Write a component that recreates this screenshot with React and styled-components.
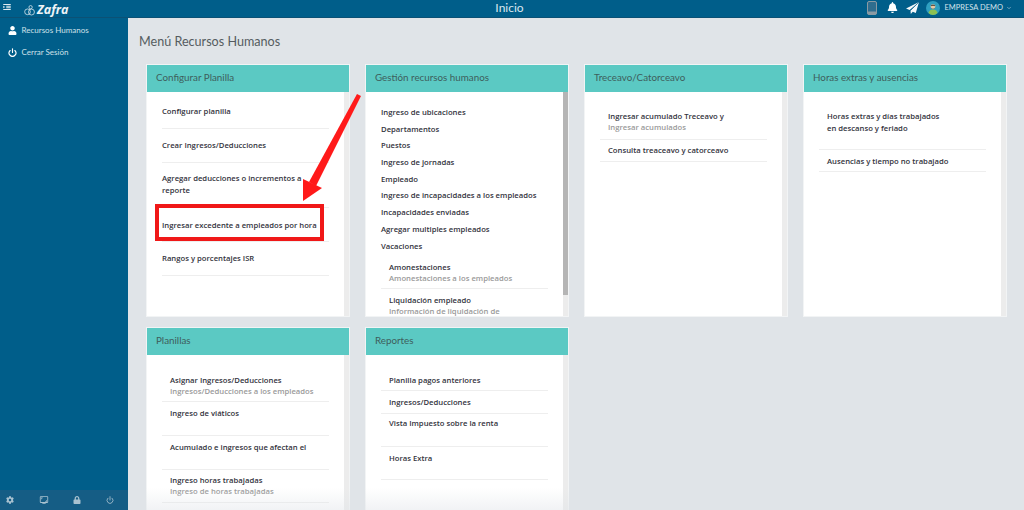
import React from "react";
import styled, { createGlobalStyle } from "styled-components";
import { FaUser, FaBell, FaCog, FaLock } from "react-icons/fa";
import { FiPower, FiChevronDown } from "react-icons/fi";
import { MdOutlineScreenshotMonitor } from "react-icons/md";

const GlobalStyle = createGlobalStyle`
  html, body { margin: 0; padding: 0; height: 100%; overflow: hidden; }
  body { font-family: "Open Sans", "Liberation Sans", sans-serif; background: #e0e4e8; }
  #root { height: 100%; }
`;

const cards = [
  {
    title: "Configurar Planilla",
    top: 5,
    rows: [
      { label: "Configurar planilla", h: 32, pt: 8 },
      { label: "Crear Ingresos/Deducciones", h: 34, pt: 10 },
      { label: "Agregar deducciones o incrementos a reporte", h: 45, pt: 9 },
      { label: "Ingresar excedente a empleados por hora", h: 34, pt: 11 },
      { label: "Rangos y porcentajes ISR", h: 34, pt: 10 },
    ],
  },
  {
    title: "Gestión recursos humanos",
    dark: true,
    top: 12,
    plain: [
      "Ingreso de ubicaciones",
      "Departamentos",
      "Puestos",
      "Ingreso de jornadas",
      "Empleado",
      "Ingreso de incapacidades a los empleados",
      "Incapacidades enviadas",
      "Agregar multiples empleados",
      "Vacaciones",
    ],
    inset: true,
    rows: [
      { label: "Amonestaciones", sub: "Amonestaciones a los empleados", h: 35, pt: 7 },
      { label: "Liquidación empleado", sub: "Información de liquidación de", h: 33, pt: 5 },
    ],
  },
  {
    title: "Treceavo/Catorceavo",
    inset: true,
    top: 10,
    rows: [
      { label: "Ingresar acumulado Treceavo y", sub: "Ingresar acumulados", h: 38, pt: 8 },
      { label: "Consulta treaceavo y catorceavo", h: 22, pt: 3.5 },
    ],
  },
  {
    title: "Horas extras y ausencias",
    inset: true,
    top: 10,
    rows: [
      { label: "Horas extras y días trabajados en descanso y feriado", h: 48, pt: 8, narrow: true },
      { label: "Ausencias y tiempo no trabajado", h: 22, pt: 4.5 },
    ],
  },
  {
    title: "Planillas",
    inset: true,
    top: 10,
    rows: [
      { label: "Asignar Ingresos/Deducciones", sub: "Ingresos/Deducciones a los empleados", h: 37, pt: 8.5 },
      { label: "Ingreso de viáticos", h: 34, pt: 5 },
      { label: "Acumulado e ingresos que afectan el", h: 34, pt: 5 },
      { label: "Ingreso horas trabajadas", sub: "Ingreso de horas trabajadas", h: 33, pt: 3.5 },
    ],
  },
  {
    title: "Reportes",
    inset: true,
    top: 10,
    rows: [
      { label: "Planilla pagos anteriores", h: 26, pt: 8.5 },
      { label: "Ingresos/Deducciones", h: 23, pt: 5 },
      { label: "Vista Impuesto sobre la renta", h: 33, pt: 2.5 },
      { label: "Horas Extra", h: 33, pt: 5 },
    ],
  },
];

function Logo() {
  return (
    <LogoWrap>
      <svg width="11" height="11" viewBox="0 0 10 10" fill="none" stroke="#dfeaf0" strokeWidth="0.7">
        <circle cx="3.2" cy="6.2" r="2.6" />
        <circle cx="6.8" cy="6.4" r="2.7" />
        <circle cx="6" cy="2" r="1.5" />
      </svg>
      <LogoText>Zafra</LogoText>
    </LogoWrap>
  );
}

function Avatar() {
  return (
    <svg width="14" height="14" viewBox="0 0 14 14">
      <circle cx="7" cy="7" r="7" fill="#2f9fc0" />
      <path d="M2.5 12c.5-2.6 2.2-3.6 4.5-3.6s4 1 4.5 3.6A7 7 0 0 1 7 14a7 7 0 0 1-4.5-2z" fill="#8cc152" />
      <circle cx="7" cy="5.6" r="2.4" fill="#e8c9a4" />
      <path d="M4.8 5.2C5 3.3 9 3.3 9.2 5.2 8 4.5 6 4.5 4.8 5.2z" fill="#4a4038" />
      <path d="M5.2 6.8c.8 1.5 2.8 1.5 3.6 0 0 1.7-3.6 1.7-3.6 0z" fill="#4a4038" />
    </svg>
  );
}

function PhoneIcon() {
  return (
    <svg width="10" height="14" viewBox="0 0 10 14">
      <rect x="0.5" y="0.5" width="9" height="13" rx="1.5" fill="#2f6d8e" stroke="#8a9aa3" />
      <rect x="0.5" y="10.5" width="9" height="3" rx="1" fill="#8a9aa3" />
    </svg>
  );
}

function PlaneIcon() {
  return (
    <svg width="13" height="12" viewBox="0 0 13 12">
      <path d="M13 0L0 6.5l3.6 1.4zM13 0L4.5 8.5 4.8 12l2-2.3 3 1.3z" fill="#f4f8fa" />
      <path d="M13 0L4.5 8.5" stroke="#005e8a" strokeWidth="0.6" />
    </svg>
  );
}

function Card({ card }) {
  return (
    <CardBox>
      <CardHead>{card.title}</CardHead>
      <CardBody>
        <CardList $top={card.top}>
          {card.plain &&
            card.plain.map((p) => <PlainItem key={p}>{p}</PlainItem>)}
          {card.rows.map((r) => (
            <Row key={r.label} $h={r.h} $pt={r.pt}>
              <RowLabel $inset={card.inset} $narrow={r.narrow}>{r.label}</RowLabel>
              {r.sub && <RowSub $inset={card.inset}>{r.sub}</RowSub>}
            </Row>
          ))}
        </CardList>
        <Track $dark={card.dark} />
      </CardBody>
    </CardBox>
  );
}

export default function App() {
  return (
    <Page>
      <GlobalStyle />
      <TopBar>
        <TopLeft>
          <MenuIcon viewBox="0 0 10 8" width="8" height="6">
            <path d="M0 0h10v1.3H0zM4 2.3h6v1.3H4zM4 4.4h6v1.3H4zM0 6.6h10v1.3H0z" fill="#dfeaf0" />
            <path d="M0 2.2l2.5 1.8L0 5.800z" fill="#dfeaf0" />
          </MenuIcon>
          <Logo />
        </TopLeft>
        <TopTitle>Inicio</TopTitle>
        <TopRight>
          <PhoneIcon />
          <BellWrap>
            <FaBell size={11} color="#fff" />
          </BellWrap>
          <PlaneIcon />
          <UserChip>
            <Avatar />
            <UserName>EMPRESA DEMO</UserName>
            <FiChevronDown size={6} color="#d5e3ea" />
          </UserChip>
        </TopRight>
      </TopBar>
      <Body>
        <Sidebar>
          <SideNav>
            <SideItem>
              <FaUser size={9} />
              <span>Recursos Humanos</span>
            </SideItem>
            <SideItem>
              <FiPower size={9} strokeWidth={3} />
              <span>Cerrar Sesión</span>
            </SideItem>
          </SideNav>
          <SideFooter>
            <FaCog size={8} />
            <MdOutlineScreenshotMonitor size={10} />
            <FaLock size={8} />
            <FiPower size={8} strokeWidth={2.5} />
          </SideFooter>
        </Sidebar>
        <Main>
          <PageTitle>Menú Recursos Humanos</PageTitle>
          <CardGrid>
            {cards.map((c) => (
              <Card key={c.title} card={c} />
            ))}
          </CardGrid>
          <HighlightBox />
          <Arrow width="70" height="125" viewBox="0 0 70 125">
            <polygon points="57,4 61,6 16,96 9,92" fill="#ff1a1a" />
            <polygon points="3,89 22,98 3,111" fill="#ff1a1a" />
          </Arrow>
          <BottomFade />
        </Main>
      </Body>
    </Page>
  );
}

const Page = styled.div`
  display: flex;
  flex-direction: column;
  width: 1024px;
  height: 510px;
  overflow: hidden;
`;

const TopBar = styled.header`
  flex: 0 0 18px;
  display: grid;
  grid-template-columns: 1fr auto 1fr;
  align-items: center;
  background: #005e8a;
  border-bottom: 1px solid #0b5175;
  box-sizing: border-box;
  color: #fff;
`;

const TopLeft = styled.div`
  display: flex;
  align-items: center;
  padding-left: 3px;
`;

const MenuIcon = styled.svg`
  display: block;
  margin-top: -4px;
`;

const LogoWrap = styled.div`
  display: flex;
  align-items: center;
  gap: 2px;
  margin-left: 13px;
  margin-top: 3px;
`;

const LogoText = styled.span`
  font-family: "Open Sans", sans-serif;
  font-weight: 700;
  font-style: italic;
  font-size: 12.5px;
  line-height: 14px;
  color: #eef4f7;
`;

const TopTitle = styled.div`
  font-family: "Lato", sans-serif;
  font-size: 12px;
  color: #dbe7ee;
  margin-left: -5px;
  margin-top: -3px;
`;

const TopRight = styled.div`
  display: flex;
  justify-content: flex-end;
  align-items: center;
  gap: 8px;
  padding-right: 12px;
  margin-top: -2px;
`;

const BellWrap = styled.div`
  display: flex;
  margin-left: 2px;
`;

const UserChip = styled.div`
  display: flex;
  align-items: center;
  gap: 4px;
  margin-left: -1px;
  svg:last-child { margin-left: -1px; }
`;

const UserName = styled.span`
  font-family: "Lato", sans-serif;
  font-size: 7.5px;
  color: #d5e3ea;
`;

const Body = styled.div`
  flex: 1;
  display: flex;
  min-height: 0;
`;

const Sidebar = styled.aside`
  flex: 0 0 128px;
  display: flex;
  flex-direction: column;
  justify-content: space-between;
  background: #005e8a;
`;

const SideNav = styled.nav`
  display: flex;
  flex-direction: column;
  padding: 0 0 0 8px;
  margin-top: 1px;
`;

const SideItem = styled.div`
  display: flex;
  align-items: center;
  gap: 4.5px;
  height: 22px;
  font-family: "Lato", sans-serif;
  font-size: 8px;
  color: #cfe0e9;
  svg { color: #fff; flex: none; }
`;

const SideFooter = styled.div`
  height: 20px;
  display: flex;
  justify-content: space-between;
  align-items: center;
  padding: 0 14px 0 6px;
  background: #155d85;
  color: #a9c2d0;
`;

const Main = styled.main`
  flex: 1;
  position: relative;
  padding: 15px 0 0 19px;
  min-width: 0;
  overflow: hidden;
`;

const PageTitle = styled.h1`
  margin: 0 0 14px -8px;
  font-family: "Lato", sans-serif;
  font-size: 12.6px;
  line-height: 18px;
  font-weight: 400;
  color: #555c60;
  white-space: nowrap;
`;

const CardGrid = styled.div`
  display: grid;
  grid-template-columns: repeat(4, 202px);
  grid-auto-rows: 251px;
  column-gap: 17px;
  row-gap: 12px;
`;

const CardBox = styled.section`
  display: flex;
  flex-direction: column;
  background: #fff;
  outline: 1px solid #f2f4f5;
  min-height: 0;
`;

const CardHead = styled.div`
  flex: 0 0 27px;
  padding-left: 9px;
  font-family: "Lato", sans-serif;
  font-size: 9.8px;
  line-height: 25px;
  color: #3e5e5c;
  background: #5bc9c3;
`;

const CardBody = styled.div`
  flex: 1;
  display: flex;
  min-height: 0;
  overflow: hidden;
`;

const CardList = styled.div`
  flex: 1;
  padding: ${(p) => p.$top}px 15px 0 15px;
  min-width: 0;
`;

const Track = styled.div`
  flex: 0 0 5px;
  background: ${(p) => (p.$dark ? "linear-gradient(#b5b5b5 0 203px, #ececec 203px)" : "#ececec")};
`;

const PlainItem = styled.div`
  height: 16.7px;
  line-height: 16.7px;
  font-size: 7.7px;
  font-weight: 600;
  color: #33333d;
  white-space: nowrap;
`;

const Row = styled.div`
  height: ${(p) => p.$h}px;
  box-sizing: border-box;
  border-bottom: 1px solid #eeeeee;
  padding-top: ${(p) => p.$pt}px;
`;

const RowLabel = styled.div`
  font-size: 7.7px;
  font-weight: 600;
  line-height: 12px;
  color: #33333d;
  padding-left: ${(p) => (p.$inset ? 8 : 0)}px;
  max-width: ${(p) => (p.$narrow ? "118px" : "none")};
`;

const RowSub = styled.div`
  font-size: 7.7px;
  font-weight: 600;
  line-height: 11px;
  color: #9a9a9a;
  padding-left: ${(p) => (p.$inset ? 8 : 0)}px;
  white-space: nowrap;
`;

const HighlightBox = styled.div`
  position: absolute;
  left: 27px;
  top: 186px;
  width: 169px;
  height: 37px;
  box-sizing: border-box;
  border: 4px solid #f01818;
`;

const Arrow = styled.svg`
  position: absolute;
  left: 172px;
  top: 72px;
`;

const BottomFade = styled.div`
  position: absolute;
  left: 0;
  right: 0;
  bottom: 0;
  height: 22px;
  background: linear-gradient(rgba(224, 228, 232, 0), rgba(224, 228, 232, 0.45));
  pointer-events: none;
`;
